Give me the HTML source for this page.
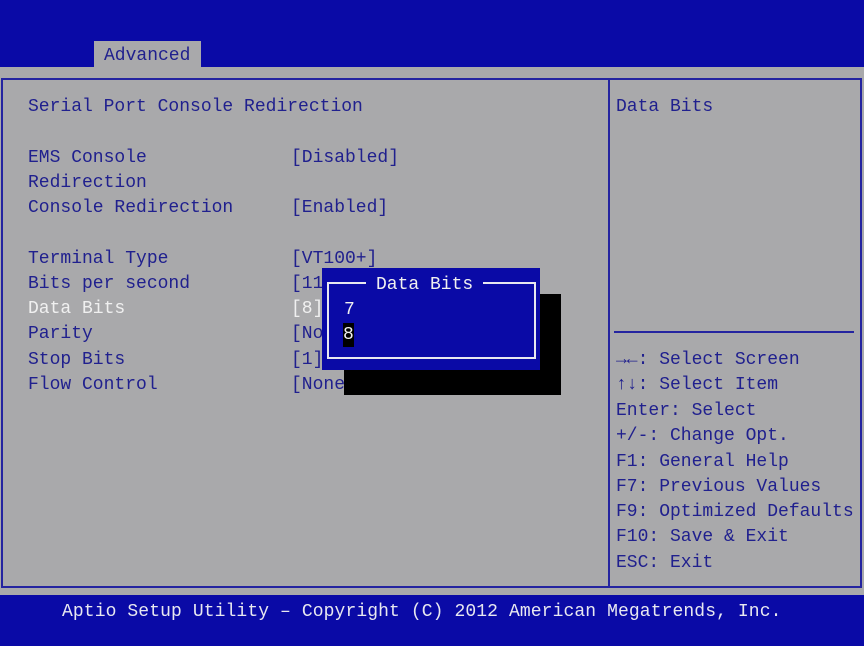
<!DOCTYPE html>
<html><head><style>
body{margin:0;width:864px;height:646px;background:#a9a9ab;position:relative;overflow:hidden;font-family:"Liberation Mono",monospace;font-size:18px;color:#20208e}
.a{position:absolute;white-space:pre;line-height:20px;margin-top:2px}
.top{position:absolute;left:0;top:0;width:864px;height:67px;background:#0a0aa6}
.tab{position:absolute;left:94px;top:41px;width:107px;height:26px;background:#a9a9ab;color:#20208e}
.frame{position:absolute;left:1px;top:78px;width:857px;height:506px;border:2px solid #2424a0}
.vl{position:absolute;left:608px;top:78px;width:2px;height:510px;background:#2424a0}
.hl{position:absolute;left:614px;top:331px;width:240px;height:2px;background:#2424a0}
.foot{position:absolute;left:0;top:595px;width:864px;height:51px;background:#0a0aa6}
</style></head><body>
<div class="top"></div>
<div class="tab"><div class="a" style="left:10px;top:3px">Advanced</div></div>
<div class="frame"></div><div class="vl"></div><div class="hl"></div>
<div class="a" style="left:28px;top:95px">Serial Port Console Redirection</div>
<div class="a" style="left:28px;top:146px">EMS Console</div>
<div class="a" style="left:28px;top:171px">Redirection</div>
<div class="a" style="left:28px;top:196px">Console Redirection</div>
<div class="a" style="left:28px;top:247px">Terminal Type</div>
<div class="a" style="left:28px;top:272px">Bits per second</div>
<div class="a" style="left:28px;top:297px;color:#f0f0f0">Data Bits</div>
<div class="a" style="left:28px;top:322px">Parity</div>
<div class="a" style="left:28px;top:348px">Stop Bits</div>
<div class="a" style="left:28px;top:373px">Flow Control</div>
<div class="a" style="left:291px;top:146px">[Disabled]</div>
<div class="a" style="left:291px;top:196px">[Enabled]</div>
<div class="a" style="left:291px;top:247px">[VT100+]</div>
<div class="a" style="left:291px;top:272px">[11</div>
<div class="a" style="left:291px;top:297px;color:#f0f0f0">[8]</div>
<div class="a" style="left:291px;top:322px">[No</div>
<div class="a" style="left:291px;top:348px">[1]</div>
<div class="a" style="left:291px;top:373px">[None</div>
<div style="position:absolute;left:344px;top:294px;width:217px;height:101px;background:#000"></div>
<div style="position:absolute;left:322px;top:268px;width:218px;height:102px;background:#0a0aa6"></div>
<div style="position:absolute;left:327px;top:282px;width:205px;height:73px;border:2px solid #e8e8f0"></div>
<div class="a" style="left:366px;top:273px;background:#0a0aa6;color:#f0f0f0;padding:0 10px">Data Bits</div>
<div class="a" style="left:344px;top:298px;color:#f0f0f0">7</div>
<div class="a" style="left:343px;top:321px;color:#f0f0f0;background:#000;line-height:24px">8</div>
<div class="a" style="left:616px;top:95px">Data Bits</div>
<div class="a" style="left:616px;top:348px"><b>→←</b>: Select Screen</div>
<div class="a" style="left:616px;top:373px"><b>↑↓</b>: Select Item</div>
<div class="a" style="left:616px;top:399px">Enter: Select</div>
<div class="a" style="left:616px;top:424px">+/-: Change Opt.</div>
<div class="a" style="left:616px;top:450px">F1: General Help</div>
<div class="a" style="left:616px;top:475px">F7: Previous Values</div>
<div class="a" style="left:616px;top:500px">F9: Optimized Defaults</div>
<div class="a" style="left:616px;top:525px">F10: Save &amp; Exit</div>
<div class="a" style="left:616px;top:551px">ESC: Exit</div>
<div class="foot"></div>
<div class="a" style="left:62px;top:600px;color:#e8e8f0;letter-spacing:0.1px">Aptio Setup Utility – Copyright (C) 2012 American Megatrends, Inc.</div>
</body></html>
